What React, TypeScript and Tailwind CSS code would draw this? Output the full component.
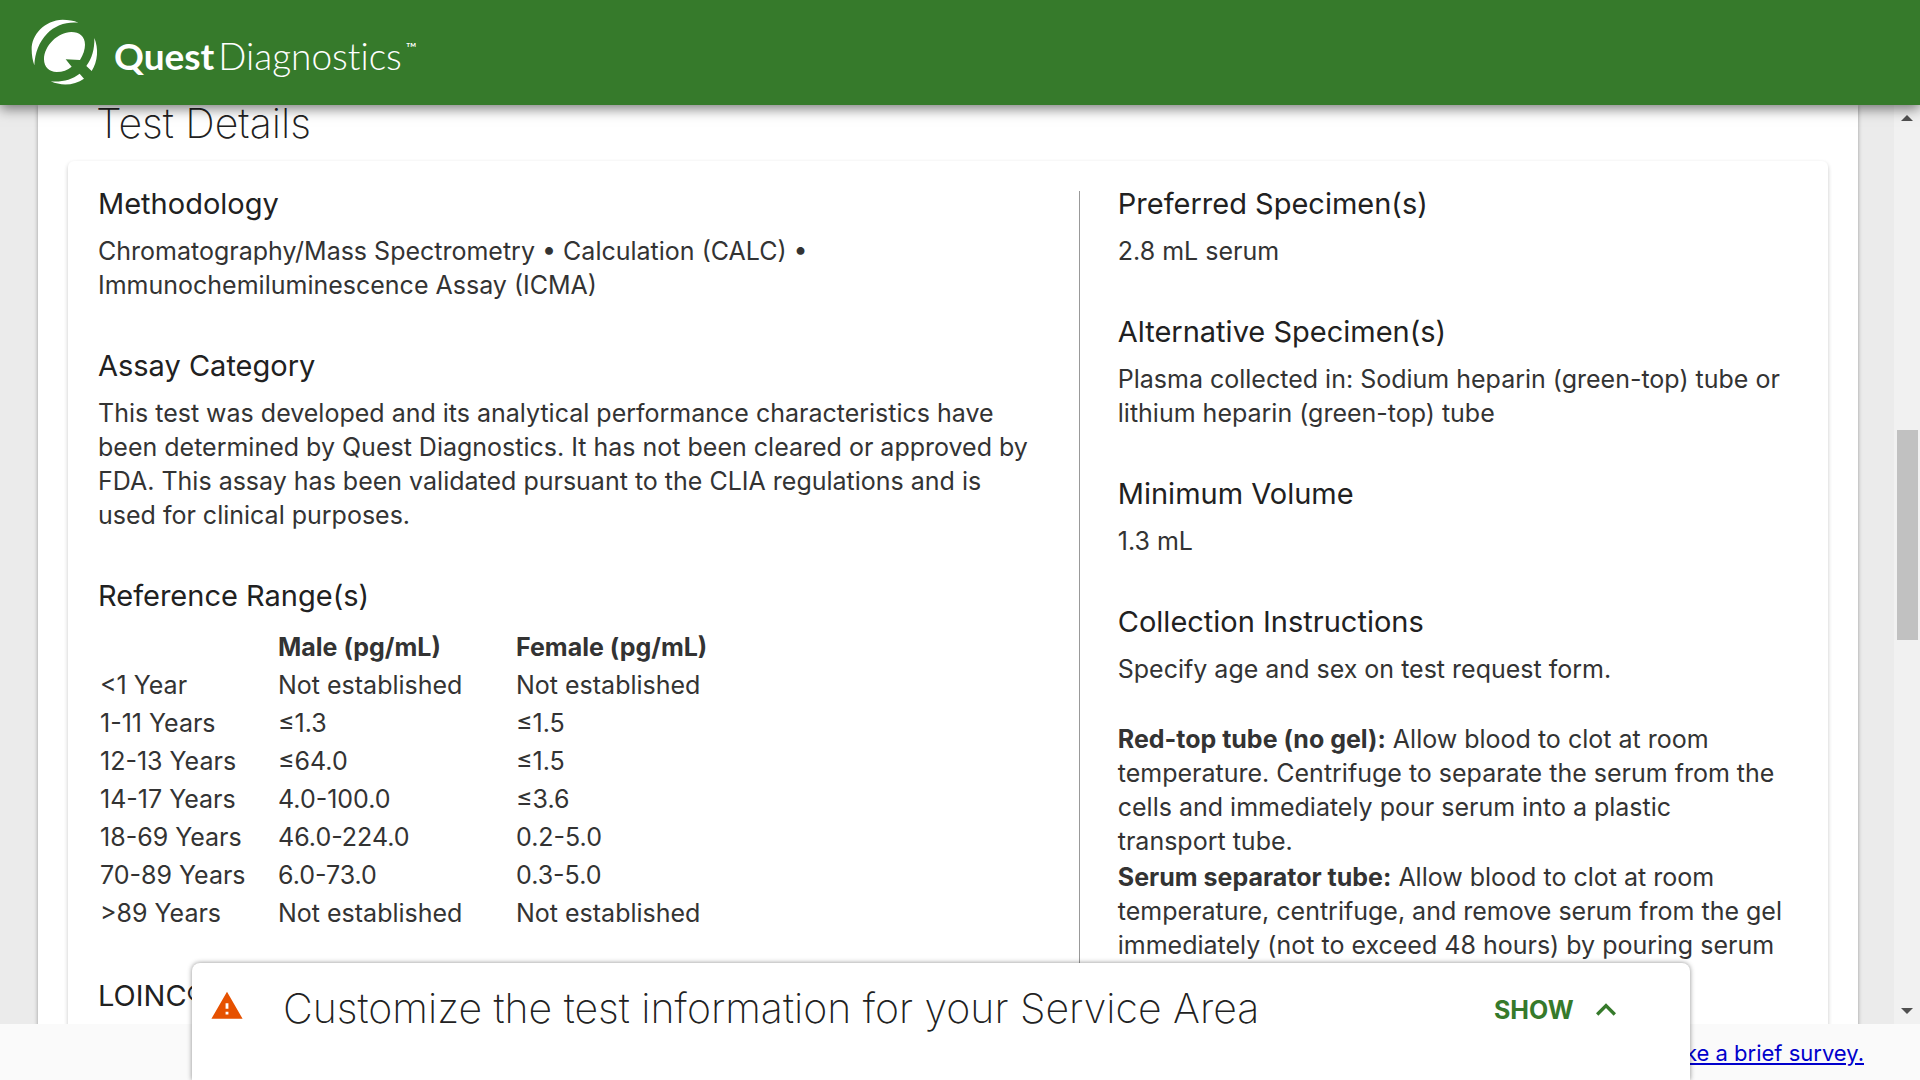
import type { ReactNode } from "react";
import { MdKeyboardArrowUp, MdWarning } from "react-icons/md";

const ranges = [
  { age: "<1 Year", male: "Not established", female: "Not established" },
  { age: "1-11 Years", male: "≤1.3", female: "≤1.5" },
  { age: "12-13 Years", male: "≤64.0", female: "≤1.5" },
  { age: "14-17 Years", male: "4.0-100.0", female: "≤3.6" },
  { age: "18-69 Years", male: "46.0-224.0", female: "0.2-5.0" },
  { age: "70-89 Years", male: "6.0-73.0", female: "0.3-5.0" },
  { age: ">89 Years", male: "Not established", female: "Not established" },
];

export default function App() {
  return (
    <div className="relative flex h-screen flex-col overflow-hidden bg-[#fafafa] font-['Inter',sans-serif] text-[25px] leading-[34px] text-[#333]">
      <Header />

      <div className="flex min-h-0 flex-1 bg-[#ebebeb]">
        <main className="min-w-0 flex-1 overflow-hidden pr-9 pl-[38px]">
          <div className="min-h-full bg-white px-[30px] pb-8 shadow-[0_1px_4px_rgba(0,0,0,0.35)]">
            <h1 className="px-7 text-[41px] leading-9 font-[250] text-[#212121]">Test Details</h1>
            <div className="mt-5 grid grid-cols-[15fr_11fr] rounded-md p-[30px] shadow-[0_2px_4px_rgba(0,0,0,0.22)]">
              <LeftColumn />
              <RightColumn />
            </div>
          </div>
        </main>
        <Scrollbar />
      </div>

      <footer className="flex h-14 shrink-0 items-center justify-end pt-0.5 pr-14 text-[22px]">
        <a href="#survey" className="text-[#0000cc] underline">Take a brief survey.</a>
      </footer>

      <ServiceAreaBar />
    </div>
  );
}

function Header() {
  return (
    <header className="relative z-10 flex h-[105px] shrink-0 bg-[#367a2b] px-6 pt-2.5 text-white shadow-[0_4px_12px_rgba(0,0,0,0.5)]">
      <a href="#home" className="flex h-20 gap-2.5" aria-label="Quest Diagnostics">
        <svg viewBox="0 0 240 240" className="size-20" fill="currentColor" aria-hidden="true">
          <path d="M163 38C150 31 132 29 116 29C62 31 22 74 23 118C23 136 26 152 31 166C33 128 45 96 69 71C94 45 129 34 163 38Z" />
          <path d="M168 150C178 134 183 118 183 104C183 79 166 66 142 66C101 66 60 108 60 148C60 172 76 186 98 186C116 186 131 180 143 170L125 148Z" />
          <path d="M211 84C224 115 222 154 203 183L187 168C204 145 212 118 211 84Z" />
          <path d="M167 191L180 206C152 226 113 229 80 214C114 217 143 209 167 191Z" />
        </svg>
        <span className="flex items-start gap-1 pt-6 font-['Lato',sans-serif] text-[37px] leading-[44px] [font-variant-ligatures:none]">
          <span className="font-bold">Quest</span>
          <span className="font-light">Diagnostics</span>
          <span className="pt-1.5 text-[14px] leading-4">™</span>
        </span>
      </a>
    </header>
  );
}

function LeftColumn() {
  return (
    <div className="flex flex-col gap-[51px] pr-10">
      <Section title="Methodology">
        <p>
          Chromatography/Mass Spectrometry • Calculation (CALC) •<br />
          Immunochemiluminescence Assay (ICMA)
        </p>
      </Section>
      <Section title="Assay Category">
        <p>
          This test was developed and its analytical performance characteristics have been determined by Quest
          Diagnostics. It has not been cleared or approved by FDA. This assay has been validated pursuant to the CLIA
          regulations and is used for clinical purposes.
        </p>
      </Section>
      <Section title="Reference Range(s)">
        <table className="mt-0.5 text-left">
          <thead>
            <tr className="h-[38px]">
              <td className="w-[178px]" />
              <th scope="col" className="w-[238px] pl-0.5 font-bold">Male (pg/mL)</th>
              <th scope="col" className="pl-0.5 font-bold">Female (pg/mL)</th>
            </tr>
          </thead>
          <tbody>
            {ranges.map((r) => (
              <tr key={r.age} className="h-[38px]">
                <td className="pl-0.5">{r.age}</td>
                <td className="pl-0.5">{r.male}</td>
                <td className="pl-0.5">{r.female}</td>
              </tr>
            ))}
          </tbody>
        </table>
      </Section>
      <Section title="LOINC® Code(s)" />
    </div>
  );
}

function RightColumn() {
  return (
    <div className="flex flex-col gap-[51px] border-l border-[#999] pl-[38px]">
      <Section title="Preferred Specimen(s)">
        <p>2.8 mL serum</p>
      </Section>
      <Section title="Alternative Specimen(s)">
        <p>Plasma collected in: Sodium heparin (green-top) tube or lithium heparin (green-top) tube</p>
      </Section>
      <Section title="Minimum Volume">
        <p>1.3 mL</p>
      </Section>
      <Section title="Collection Instructions">
        <p>Specify age and sex on test request form.</p>
        <p className="mt-9">
          <b>Red-top tube (no gel):</b> Allow blood to clot at room temperature. Centrifuge to separate the serum from
          the cells and immediately pour serum into a plastic
          <br />
          transport tube.
        </p>
        <p className="mt-0.5">
          <b>Serum separator tube:</b> Allow blood to clot at room temperature, centrifuge, and remove serum from the
          gel immediately (not to exceed 48 hours) by pouring serum
        </p>
      </Section>
    </div>
  );
}

function Section({ title, children }: { title: string; children?: ReactNode }) {
  return (
    <section>
      <h2 className="text-[29px] leading-[26px] text-[#212121] not-last:pb-[17px]">{title}</h2>
      {children}
    </section>
  );
}

function Scrollbar() {
  return (
    <div className="flex w-[26px] flex-col items-center bg-[#f1f1f1] py-2.5 text-[#505050]" aria-hidden="true">
      <svg viewBox="0 0 12 6" className="h-1.5 w-3" fill="currentColor">
        <path d="M6 0L12 6H0Z" />
      </svg>
      <div className="grow-[31]" />
      <div className="h-[210px] w-[21px] bg-[#c1c1c1]" />
      <div className="grow-[37]" />
      <svg viewBox="0 0 12 6" className="h-1.5 w-3" fill="currentColor">
        <path d="M0 0H12L6 6Z" />
      </svg>
    </div>
  );
}

function ServiceAreaBar() {
  return (
    <aside className="absolute bottom-0 left-[10%] flex h-[117px] w-[78%] items-start rounded-t-lg bg-white pt-5 pr-16 pl-[18px] shadow-[0_0_5px_rgba(0,0,0,0.45)]">
      <MdWarning className="mt-1.5 size-[34px] text-[#e65100]" />
      <h2 className="ml-[39px] flex-1 text-[41px] leading-[50px] font-[250] text-[#212121]">
        Customize the test information for your Service Area
      </h2>
      <button type="button" className="flex items-center gap-3 pt-0.5 leading-[50px] font-bold text-[#367a2b]">
        SHOW
        <MdKeyboardArrowUp className="size-10" />
      </button>
    </aside>
  );
}
